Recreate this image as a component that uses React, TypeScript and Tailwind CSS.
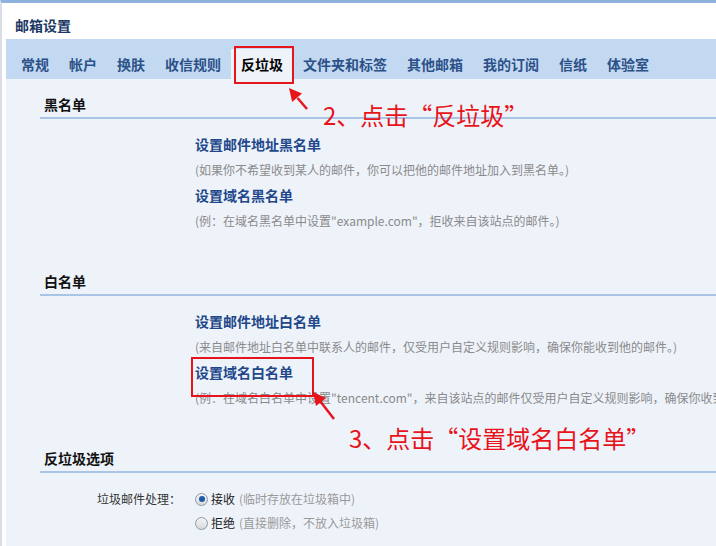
import React from "react";

const tabs = ["常规", "帐户", "换肤", "收信规则", "反垃圾", "文件夹和标签", "其他邮箱", "我的订阅", "信纸", "体验室"];

function Heading({ children }: { children: React.ReactNode }) {
  return (
    <div className="h-[25px] pb-[3px] border-b-2 border-[#a9c4e4]">
      <div className="h-[20px] leading-[20px] pl-[4px] text-[14px] font-bold text-[#111]">{children}</div>
    </div>
  );
}

function LinkRow({ children }: { children: React.ReactNode }) {
  return <div className="h-[26px] flex items-center text-[14px] font-bold text-[#21478a]">{children}</div>;
}

function NoteRow({ children }: { children: React.ReactNode }) {
  return <div className="h-[25px] flex items-center text-[12px] text-[#8a8a8a]">{children}</div>;
}

function Radio({ checked }: { checked?: boolean }) {
  return (
    <span className="w-[13px] h-[13px] rounded-full border border-[#8d99a8] bg-gradient-to-b from-[#f4f4f4] to-[#d6d9dd] flex items-center justify-center shrink-0">
      {checked ? <span className="w-[6px] h-[6px] rounded-full bg-[#1d5aa6]" /> : null}
    </span>
  );
}

export default function App() {
  return (
    <div
      className="relative w-[716px] h-[546px] overflow-hidden bg-white whitespace-nowrap"
      style={{ fontFamily: '"Noto Sans CJK SC", "Noto Sans", sans-serif' }}
    >
      <div className="h-full border-t-[3px] border-t-[#8fb1de] border-l-2 border-l-[#d9dee6] flex flex-col">
        <div className="h-[36px] pt-[8px] pl-[13px] flex items-center text-[14px] font-bold text-[#1c3865]">邮箱设置</div>
        <div className="pl-[4px] flex-1 flex flex-col">
          <div className="h-[40px] pt-[10px] pl-[5px] bg-[#c3d9f1] flex">
            {tabs.map((t) => (
              <div
                key={t}
                className={
                  t === "反垃圾"
                    ? "h-[30px] px-[10px] flex items-center text-[14px] font-bold text-black bg-[#eef3fa]"
                    : "h-[30px] px-[10px] flex items-center text-[14px] font-bold text-[#2b5188]"
                }
              >
                {t}
              </div>
            ))}
          </div>
          <div className="flex-1 bg-[#eef3fa] pl-[34px] pt-[15px]">
            <Heading>黑名单</Heading>
            <div className="mt-[12px] ml-[155px]">
              <LinkRow>设置邮件地址黑名单</LinkRow>
              <NoteRow>(如果你不希望收到某人的邮件，你可以把他的邮件地址加入到黑名单。)</NoteRow>
              <LinkRow>设置域名黑名单</LinkRow>
              <NoteRow>(例：在域名黑名单中设置"example.com"，拒收来自该站点的邮件。)</NoteRow>
            </div>
            <div className="mt-[38px]">
              <Heading>白名单</Heading>
            </div>
            <div className="mt-[12px] ml-[155px]">
              <LinkRow>设置邮件地址白名单</LinkRow>
              <NoteRow>(来自邮件地址白名单中联系人的邮件，仅受用户自定义规则影响，确保你能收到他的邮件。)</NoteRow>
              <LinkRow>设置域名白名单</LinkRow>
              <NoteRow>(例：在域名白名单中设置"tencent.com"，来自该站点的邮件仅受用户自定义规则影响，确保你收到该站点的邮件。)</NoteRow>
            </div>
            <div className="mt-[38px]">
              <Heading>反垃圾选项</Heading>
            </div>
            <div className="mt-[14px]">
              <div className="h-[24px] flex items-center">
                <div className="w-[141px] text-right text-[12px] text-[#333]">垃圾邮件处理：</div>
                <div className="ml-[14px] flex items-center">
                  <Radio checked />
                  <span className="ml-[3px] text-[12px] text-[#222]">接收</span>
                  <span className="ml-[4px] text-[12px] text-[#999]">(临时存放在垃圾箱中)</span>
                </div>
              </div>
              <div className="h-[24px] flex items-center">
                <div className="w-[141px]" />
                <div className="ml-[14px] flex items-center">
                  <Radio />
                  <span className="ml-[3px] text-[12px] text-[#222]">拒绝</span>
                  <span className="ml-[4px] text-[12px] text-[#999]">(直接删除，不放入垃圾箱)</span>
                </div>
              </div>
            </div>
          </div>
        </div>
      </div>

      {/* annotations */}
      <div className="absolute left-[234px] top-[46px] w-[60px] h-[38px] border-2 border-[#e8141c]" />
      <div className="absolute left-[191px] top-[357px] w-[123px] h-[40px] border-2 border-[#e8141c]" />
      <svg className="absolute left-0 top-0 pointer-events-none" width="716" height="546" viewBox="0 0 716 546">
        <line x1="307" y1="109" x2="297.5" y2="98" stroke="#e8141c" strokeWidth="2.5" />
        <polygon points="289,88 302,93.6 292.2,102" fill="#e8141c" />
        <line x1="334" y1="419" x2="320.4" y2="401.5" stroke="#e8141c" strokeWidth="2.5" />
        <polygon points="313,392 326,398 316,406" fill="#e8141c" />
      </svg>
      <div className="absolute left-[323px] top-[103px] text-[24px] leading-none text-[#e8141c]">2、点击“反垃圾”</div>
      <div className="absolute left-[349px] top-[426px] text-[24px] leading-none text-[#e8141c]">3、点击“设置域名白名单”</div>
    </div>
  );
}
